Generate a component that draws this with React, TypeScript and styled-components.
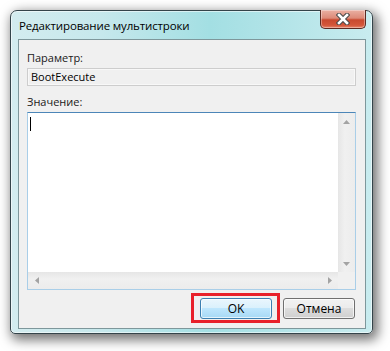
import React from "react";
import styled, { createGlobalStyle } from "styled-components";

const GlobalStyle = createGlobalStyle`
  html, body {
    margin: 0;
    padding: 0;
    background: #ffffff;
  }
  body {
    font-family: "Open Sans", "Noto Sans", "Liberation Sans", sans-serif;
    font-size: 11px;
    color: #000;
  }
`;

const Page = styled.div`
  width: 390px;
  height: 351px;
  padding: 10px 0 0 10px;
  box-sizing: border-box;
  overflow: hidden;
`;

const Window = styled.div`
  position: relative;
  width: 363px;
  height: 324px;
  box-sizing: border-box;
  border: 1px solid #34444a;
  border-radius: 7px 7px 5px 5px;
  background: linear-gradient(
    to right,
    #d3ecef 0%,
    #c6e8ec 25%,
    #a3dfe3 55%,
    #b3e4e8 75%,
    #c9ecef 100%
  );
  box-shadow: 3px 4px 12px 2px rgba(0, 0, 0, 0.55),
    inset 0 0 0 1px rgba(255, 255, 255, 0.55);
  display: flex;
  flex-direction: column;
`;

const TitleBar = styled.div`
  height: 28px;
  display: flex;
  align-items: center;
  padding-left: 8px;
  box-sizing: border-box;
`;

const TitleText = styled.div`
  flex: 1;
  font-size: 11.5px;
  letter-spacing: -0.15px;
  color: #000;
  padding-top: 1px;
`;

const CloseButton = styled.div`
  align-self: flex-start;
  width: 46px;
  height: 19px;
  margin-right: 6px;
  margin-top: -1px;
  box-sizing: border-box;
  border: 1px solid #5b2a22;
  border-top: none;
  border-radius: 0 0 5px 5px;
  background: linear-gradient(
    to bottom,
    #eab0a3 0%,
    #dd8a78 45%,
    #c9492f 55%,
    #d4573a 85%,
    #e7866c 100%
  );
  box-shadow: inset 0 0 0 1px rgba(255, 255, 255, 0.35);
  display: flex;
  align-items: center;
  justify-content: center;
`;

const Client = styled.div`
  flex: 1;
  margin: 0 6px 4px 7px;
  background: #f0f0f0;
  border: 1px solid #7e979b;
  padding: 10px 9px 8px 8px;
  display: flex;
  flex-direction: column;
`;

const Label = styled.div`
  line-height: 15px;
  height: 15px;
  color: #1a1a1a;
`;

const ReadOnlyField = styled.div`
  height: 18px;
  margin: 3px 0 8px;
  box-sizing: border-box;
  border: 1px solid #cdcdcd;
  box-shadow: inset 0 0 0 1px #f8f8f8;
  background: #f0f0f0;
  padding-left: 3px;
  line-height: 16px;
`;

const TextArea = styled.div`
  margin-top: 3px;
  height: 178px;
  box-sizing: border-box;
  border: 1px solid #a9cee8;
  border-top-color: #4c86b8;
  background: #fff;
  display: grid;
  grid-template-columns: 1fr 17px;
  grid-template-rows: 1fr 17px;
`;

const EditBody = styled.div`
  padding: 4px 0 0 2px;
`;

const Caret = styled.div`
  width: 1px;
  height: 14px;
  background: #000;
`;

const ScrollTrack = styled.div<{ $vertical?: boolean }>`
  background: ${(p) =>
    p.$vertical
      ? "linear-gradient(to right, #e6e6e6, #f0f0f0 40%, #ececec)"
      : "linear-gradient(to bottom, #e6e6e6, #f0f0f0 40%, #ececec)"};
  display: flex;
  flex-direction: ${(p) => (p.$vertical ? "column" : "row")};
  justify-content: space-between;
  align-items: center;
`;

const ArrowCell = styled.div`
  width: 17px;
  height: 17px;
  display: flex;
  align-items: center;
  justify-content: center;
`;

const Corner = styled.div`
  background: #f0f0f0;
`;

const ButtonRow = styled.div`
  display: flex;
  justify-content: flex-end;
  gap: 11px;
  margin-top: 8px;
  padding-right: 1px;
`;

const Highlighted = styled.div`
  position: relative;
  display: flex;
`;

const RedFrame = styled.div`
  position: absolute;
  left: -9px;
  right: -8px;
  top: -5px;
  bottom: -4px;
  border: 3px solid #e8202a;
  pointer-events: none;
`;

const Button = styled.button<{ $primary?: boolean }>`
  width: 72px;
  height: 21px;
  padding: 0;
  box-sizing: border-box;
  font-family: inherit;
  font-size: 12px;
  color: #000;
  border-radius: 3px;
  border: 1px solid ${(p) => (p.$primary ? "#3c7fb1" : "#707070")};
  background: ${(p) =>
    p.$primary
      ? "linear-gradient(to bottom, #eaf6fd 0%, #d9f0fc 50%, #bee6fd 50%, #a7d9f5 100%)"
      : "linear-gradient(to bottom, #f2f2f2 0%, #ebebeb 50%, #dddddd 50%, #cfcfcf 100%)"};
  box-shadow: inset 0 0 0 1px rgba(255, 255, 255, 0.7);
  line-height: 18px;
`;

const Arrow = ({ dir }: { dir: "up" | "down" | "left" | "right" }) => {
  const pts = {
    up: "1,5 4.5,1 8,5",
    down: "1,1 4.5,5 8,1",
    left: "5,1 1,4.5 5,8",
    right: "1,1 5,4.5 1,8",
  }[dir];
  const horiz = dir === "left" || dir === "right";
  return (
    <svg width={horiz ? 6 : 9} height={horiz ? 9 : 6} viewBox={horiz ? "0 0 6 9" : "0 0 9 6"}>
      <polygon points={pts} fill="#a3a3a3" />
    </svg>
  );
};

const CloseGlyph = () => (
  <svg width="14" height="12" viewBox="0 0 14 12">
    <path d="M3 2 L11 10 M11 2 L3 10" stroke="#4a4a4a" strokeWidth="4.6" strokeLinecap="square" />
    <path d="M3 2 L11 10 M11 2 L3 10" stroke="#ffffff" strokeWidth="2.6" strokeLinecap="square" />
  </svg>
);

export default function App() {
  return (
    <>
      <GlobalStyle />
      <Page>
        <Window>
          <TitleBar>
            <TitleText>Редактирование мультистроки</TitleText>
            <CloseButton>
              <CloseGlyph />
            </CloseButton>
          </TitleBar>
          <Client>
            <Label>Параметр:</Label>
            <ReadOnlyField>BootExecute</ReadOnlyField>
            <Label>Значение:</Label>
            <TextArea>
              <EditBody>
                <Caret />
              </EditBody>
              <ScrollTrack $vertical>
                <ArrowCell>
                  <Arrow dir="up" />
                </ArrowCell>
                <ArrowCell>
                  <Arrow dir="down" />
                </ArrowCell>
              </ScrollTrack>
              <ScrollTrack>
                <ArrowCell>
                  <Arrow dir="left" />
                </ArrowCell>
                <ArrowCell>
                  <Arrow dir="right" />
                </ArrowCell>
              </ScrollTrack>
              <Corner />
            </TextArea>
            <ButtonRow>
              <Highlighted>
                <Button $primary>OK</Button>
                <RedFrame />
              </Highlighted>
              <Button>Отмена</Button>
            </ButtonRow>
          </Client>
        </Window>
      </Page>
    </>
  );
}
